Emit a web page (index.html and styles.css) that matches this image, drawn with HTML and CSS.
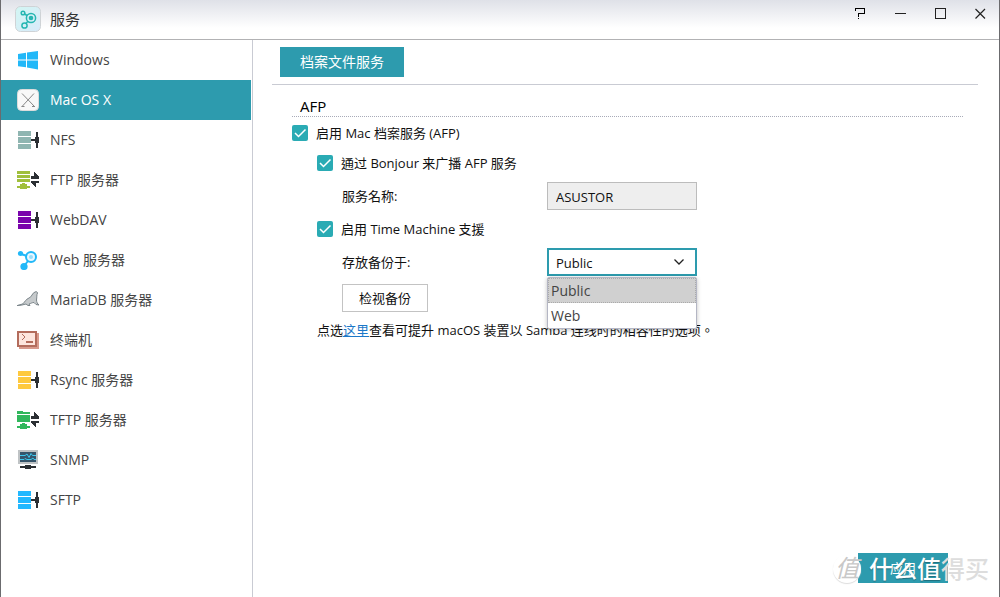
FILE: index.html
```html
<!DOCTYPE html>
<html lang="zh-Hant">
<head>
<meta charset="utf-8">
<meta name="viewport" content="width=device-width, initial-scale=1">
<title>服务</title>
<link rel="stylesheet" href="styles.css">
</head>
<body>
<svg class="defs" aria-hidden="true">
  <symbol id="server" viewBox="0 0 24 20" shape-rendering="crispEdges">
    <path fill="currentColor" d="M1 1h13v5H1zM1 7h13v6H1zM1 14h13v5H1z"/>
    <path fill="#2b2f33" d="M14 9h4V7h1V2h2v5h1v6h-1v5h-2v-5h-1v-2h-4z"/>
  </symbol>
  <symbol id="arrows" viewBox="0 0 24 20" shape-rendering="crispEdges">
    <path fill="#2b2f33" d="M14 6h3V2h1v1h1v1h1v1h1v1h1v3h-8zM14 11h8v2h-3v4h-1v-1h-1v-1h-1v-1h-1v-1h-1z"/>
  </symbol>
</svg>
<div class="window">
  <header class="titlebar">
    <svg class="app-icon" viewBox="0 0 26 26" aria-hidden="true">
      <defs><linearGradient id="tile" x2="1" y2="1"><stop stop-color="#d2f6f3"/><stop offset="1" stop-color="#d9eafa"/></linearGradient></defs>
      <rect x=".5" y=".5" width="25" height="25" rx="5" fill="url(#tile)" stroke="#cfd3d6"/>
      <g fill="none" stroke="#26b6b2" stroke-width="1.5"><circle cx="16" cy="12" r="4.6"/><circle cx="8" cy="7" r="1.8"/><circle cx="9.500" cy="19.500" r="2.600"/><path d="M9.700 8l2.300 1.500M11 17.300l2.300-2.400"/></g>
      <circle cx="16" cy="12" r="2.300" fill="#26b6b2"/>
    </svg>
    <h1 class="title">服务</h1>
    <div class="controls">
      <button class="control" type="button" aria-label="Help"><svg viewBox="0 0 12 12" shape-rendering="crispEdges"><path fill="#000" d="M1 0h10v6H5v3H4V5h6V1H2v2H1zM4 10h1v1H4z"/></svg></button>
      <button class="control" type="button" aria-label="Minimize"><svg viewBox="0 0 12 12" shape-rendering="crispEdges"><path fill="#222" d="M1 5h11v1H1z"/></svg></button>
      <button class="control" type="button" aria-label="Maximize"><svg viewBox="0 0 12 12" shape-rendering="crispEdges"><path fill="none" stroke="#222" d="M1.500.500h10v10h-10z"/></svg></button>
      <button class="control" type="button" aria-label="Close"><svg viewBox="0 0 12 12"><path fill="none" stroke="#222" stroke-width="1.200" d="M1.500 1l9.500 9.500M11 1L1.500 10.500"/></svg></button>
    </div>
  </header>
  <div class="body">
    <nav class="sidebar">
      <a class="item" href="#windows"><svg class="icon" viewBox="0 0 24 20"><path fill="#22b8f8" d="M1 4l8-1.200V9.500H1zM10 2.600L21 1v8.500H10zM1 10.500h8v6.800L1 16.200zM10 10.500h11V19.500L10 17.600z"/></svg>Windows</a>
      <a class="item selected" href="#mac"><svg class="icon mac" viewBox="1 0 24 24"><rect x="1.500" y="1.500" width="21" height="21" rx="4" fill="#f8f8f8" stroke="#dcdcdc"/><path fill="none" stroke="#888" d="M6 5.500l12 12.500M18 5.500L6 18.500M5.500 18.500h3M16 18.500h3"/></svg>Mac OS X</a>
      <a class="item" href="#nfs"><svg class="icon nfs"><use href="#server"/></svg>NFS</a>
      <a class="item" href="#ftp"><svg class="icon ftp" viewBox="0 0 24 20"><path shape-rendering="crispEdges" fill="currentColor" d="M0 1h13v3H0zM0 5h13v3H0zM0 9h13v3H0zM5 13h3v1h2v2h3v2h-3v1H3v-1H0v-2h3v-2h2z"/><use href="#arrows"/></svg>FTP 服务器</a>
      <a class="item" href="#webdav"><svg class="icon webdav"><use href="#server"/></svg>WebDAV</a>
      <a class="item" href="#web"><svg class="icon" viewBox="0 0 24 20"><g fill="none" stroke="#22b8f8"><circle cx="14" cy="7" r="5" stroke-width="2" fill="#e9f7ff"/><path stroke-width="2" d="M4 4l6 2M7 16l4-5"/></g><g fill="#22b8f8"><circle cx="3.500" cy="3.500" r="2.600"/><circle cx="7" cy="16.500" r="3.600"/></g><circle cx="14" cy="7" r="2" fill="#9adcf8"/></svg>Web 服务器</a>
      <a class="item" href="#mariadb"><svg class="icon" viewBox="0 0 24 20"><path fill="#c6cacc" stroke="#7b858a" d="M.5 15.500l5-1.500C8 12 9 9 12 8c3-1 3-5 6-6 1.500-.700 2.500 0 2.500 1-1 2-.500 4-1 7 0 2 1 4 2.500 5l-3-.500-2-2c-2 0-3 1-5 1.500l1 1.500h-2l-2-1.500c-3 1-6 1.500-9 1.500z"/></svg>MariaDB 服务器</a>
      <a class="item" href="#terminal"><svg class="icon" viewBox="0 0 24 20" shape-rendering="crispEdges"><path fill="#d89a8c" d="M2 3h20v16H2z"/><path fill="#fde5dd" stroke="#b36c5c" stroke-width="2" d="M1 2h18v14H1z"/><path fill="#b36c5c" d="M5 4h1v1h1v1h1v2H7v1H6v1H5V9h1V8h1V6H6V5H5zM9 11h7v2H9z"/></svg>终端机</a>
      <a class="item" href="#rsync"><svg class="icon rsync"><use href="#server"/></svg>Rsync 服务器</a>
      <a class="item" href="#tftp"><svg class="icon tftp" viewBox="0 0 24 20"><path shape-rendering="crispEdges" fill="currentColor" d="M0 1h6v1h7v2H0zM0 5h13v7H0zM5 13h3v1h2v2h3v2h-3v1H3v-1H0v-2h3v-2h2z"/><use href="#arrows"/></svg>TFTP 服务器</a>
      <a class="item" href="#snmp"><svg class="icon" viewBox="0 0 24 20"><path fill="#bfc3c5" d="M1 0h20v14H1z"/><path fill="#36556b" d="M3 2h16v10H3z"/><path fill="none" stroke="#3cc8ee" d="M3 5.500h5l2-1.500 2 3.500 2-4 1.500 2H19M3 9.500h4l1-1 2 1h4l2-1.500 1 1.500h2"/><path shape-rendering="crispEdges" fill="#2b2f33" d="M8 15h6v1h5v2h-5v1H8v-1H3v-2h5z"/></svg>SNMP</a>
      <a class="item" href="#sftp"><svg class="icon sftp"><use href="#server"/></svg>SFTP</a>
    </nav>
    <main class="content">
      <div class="tabs"><button class="tab" type="button">档案文件服务</button></div>
      <form class="panel">
        <h2 class="heading">AFP</h2>
        <div class="row"><input class="check" type="checkbox" id="afp" checked><label for="afp">启用 Mac 档案服务 (AFP)</label></div>
        <div class="row sub"><input class="check" type="checkbox" id="bonjour" checked><label for="bonjour">通过 Bonjour 来广播 AFP 服务</label></div>
        <div class="row field"><label class="name" for="service">服务名称:</label><input class="box" id="service" type="text" value="ASUSTOR" readonly></div>
        <div class="row sub"><input class="check" type="checkbox" id="tm" checked><label for="tm">启用 Time Machine 支援</label></div>
        <div class="row field"><label class="name" for="backup">存放备份于:</label>
          <div class="combo">
            <select class="box select" id="backup"><option>Public</option><option>Web</option></select>
            <svg class="chevron" viewBox="0 0 12 8" aria-hidden="true"><path fill="none" stroke="#222" stroke-width="1.300" d="M1.500 1.500L6 6l4.500-4.500"/></svg>
            <ul class="menu"><li class="choice current">Public</li><li class="choice">Web</li></ul>
          </div>
        </div>
        <div class="row field"><button class="view" type="button">检视备份</button></div>
        <p class="row sub note">点选<a class="link" href="#samba">这里</a>查看可提升 macOS 装置以 Samba 连线时的相容性的选项。</p>
      </form>
      <footer class="footer">
        <button class="apply" type="button">应用</button>
        <div class="watermark"><span class="seal">值</span><span class="brand">什么值<span class="faded">得买</span></span></div>
      </footer>
    </main>
  </div>
</div>
</body>
</html>
```

FILE: styles.css
```css
* { box-sizing: border-box; }
body {
  margin: 0;
  font: 13px/20px "Open Sans", "Noto Sans CJK TC", sans-serif;
  color: #111;
  background: #fff;
}
button, input, select { font: inherit; color: inherit; margin: 0; }
button { cursor: pointer; }
.defs { display: none; }
.window {
  display: flex;
  flex-direction: column;
  min-height: 100vh;
  border: solid #6b6b6e;
  border-width: 0 1px;
}
.titlebar {
  display: flex;
  align-items: center;
  height: 40px;
  padding: 0 7px 2px 14px;
  border-bottom: 1px solid #b2b2b4;
  background: linear-gradient(#dfe1e8, #fff 28px);
}
.app-icon { width: 26px; height: 26px; }
.title {
  flex: 1;
  margin: 0 0 0 9px;
  font-size: 15px;
  font-weight: 400;
  color: #333;
}
.controls { display: flex; gap: 16px; align-self: flex-start; padding-top: 2px; }
.control {
  display: grid;
  place-items: center;
  width: 24px;
  height: 24px;
  padding: 0;
  border: 0;
  background: none;
}
.control svg { width: 12px; height: 12px; }
.body { display: flex; flex: 1; }
.sidebar { width: 252px; padding-right: 1px; border-right: 1px solid #c9cbd3; }
.item {
  display: flex;
  align-items: center;
  gap: 9px;
  height: 40px;
  padding-left: 16px;
  font-size: 14px;
  color: #444;
  text-decoration: none;
}
.selected { background: #2d9bae; color: #fff; }
.icon { width: 24px; height: 20px; }
.mac { height: 24px; }
.nfs { color: #8fb5b1; }
.ftp { color: #a0bf3c; }
.webdav { color: #7a04ac; }
.rsync { color: #fec93f; }
.tftp { color: #31b75c; }
.sftp { color: #22b8ff; }
.content { display: flex; flex: 1; flex-direction: column; padding: 7px 21px 0 19px; }
.tabs { height: 38px; padding-left: 8px; border-bottom: 1px solid #c9cbd3; }
.tab {
  height: 30px;
  padding: 0 20px;
  border: 0;
  font-size: 14px;
  background: #2d9bae;
  color: #fff;
}
.panel { padding: 11px 15px 0 20px; }
.heading {
  margin: 0 0 1px;
  padding-left: 8px;
  border-bottom: 1px dotted #a8abb8;
  font-size: 15px;
  font-weight: 400;
  color: #000;
}
.row { display: flex; align-items: center; gap: 8px; height: 30px; }
.sub { padding-left: 25px; }
.field { height: 36px; padding-left: 50px; }
.name { width: 197px; }
.check {
  width: 16px;
  height: 16px;
  appearance: none;
  border-radius: 2px;
  background: #2aabb4 url("data:image/svg+xml,%3Csvg xmlns='http://www.w3.org/2000/svg' viewBox='0 0 16 16'%3E%3Cpath d='M3 8l3.500 3.500L13.500 4.500' fill='none' stroke='white' stroke-width='1.500'/%3E%3C/svg%3E");
}
.box {
  width: 150px;
  height: 28px;
  padding: 2px 8px 0;
  border: 1px solid #bcbcbc;
  border-radius: 0;
  outline: 0;
  background: #eee;
}
.combo { position: relative; }
.select {
  display: block;
  padding: 2px 7px 0;
  appearance: none;
  border: 2px solid #2d9bae;
  background: #fff;
}
.chevron { position: absolute; top: 10px; right: 12px; width: 12px; height: 8px; pointer-events: none; }
.menu {
  position: absolute;
  top: 29px;
  left: 0;
  width: 100%;
  margin: 0;
  padding: 0;
  border: 1px solid #b4b6c4;
  border-radius: 2px;
  list-style: none;
  background: #fff;
  box-shadow: 0 1px 4px rgba(0, 0, 0, .25);
}
.choice {
  padding: 2px 2px 1px;
  border: 1px solid transparent;
  font-size: 14px;
  color: #444;
}
.current { border: 1px dotted #aaa; background: #d0d0d0; }
.view {
  height: 28px;
  padding: 0 16px;
  border: 1px solid #c3c3c3;
  background: #fff;
}
.note { gap: 0; height: 28px; margin: 0; white-space: pre; }
.link { color: #1c78c8; }
.footer {
  position: relative;
  display: flex;
  justify-content: flex-end;
  margin-top: auto;
  padding: 0 30px 14px 0;
}
.apply {
  width: 90px;
  height: 30px;
  padding: 0;
  border: 0;
  background: #2d9bae;
  color: #fff;
}
.watermark {
  position: absolute;
  top: 2px;
  right: -11px;
  display: flex;
  align-items: center;
  gap: 8px;
  color: #fff;
  line-height: 28px;
  text-shadow: 0 1px 1px rgba(0, 0, 0, .3);
  pointer-events: none;
}
.seal {
  width: 28px;
  height: 28px;
  border-radius: 50%;
  background: #fff;
  box-shadow: 0 1px 1px #ddd;
  color: #c8c8c8;
  font-size: 24px;
  font-style: italic;
  line-height: 26px;
  text-align: center;
  text-shadow: none;
}
.brand { font-size: 24px; font-weight: 500; }
.faded { color: #ddd; text-shadow: none; }
```
